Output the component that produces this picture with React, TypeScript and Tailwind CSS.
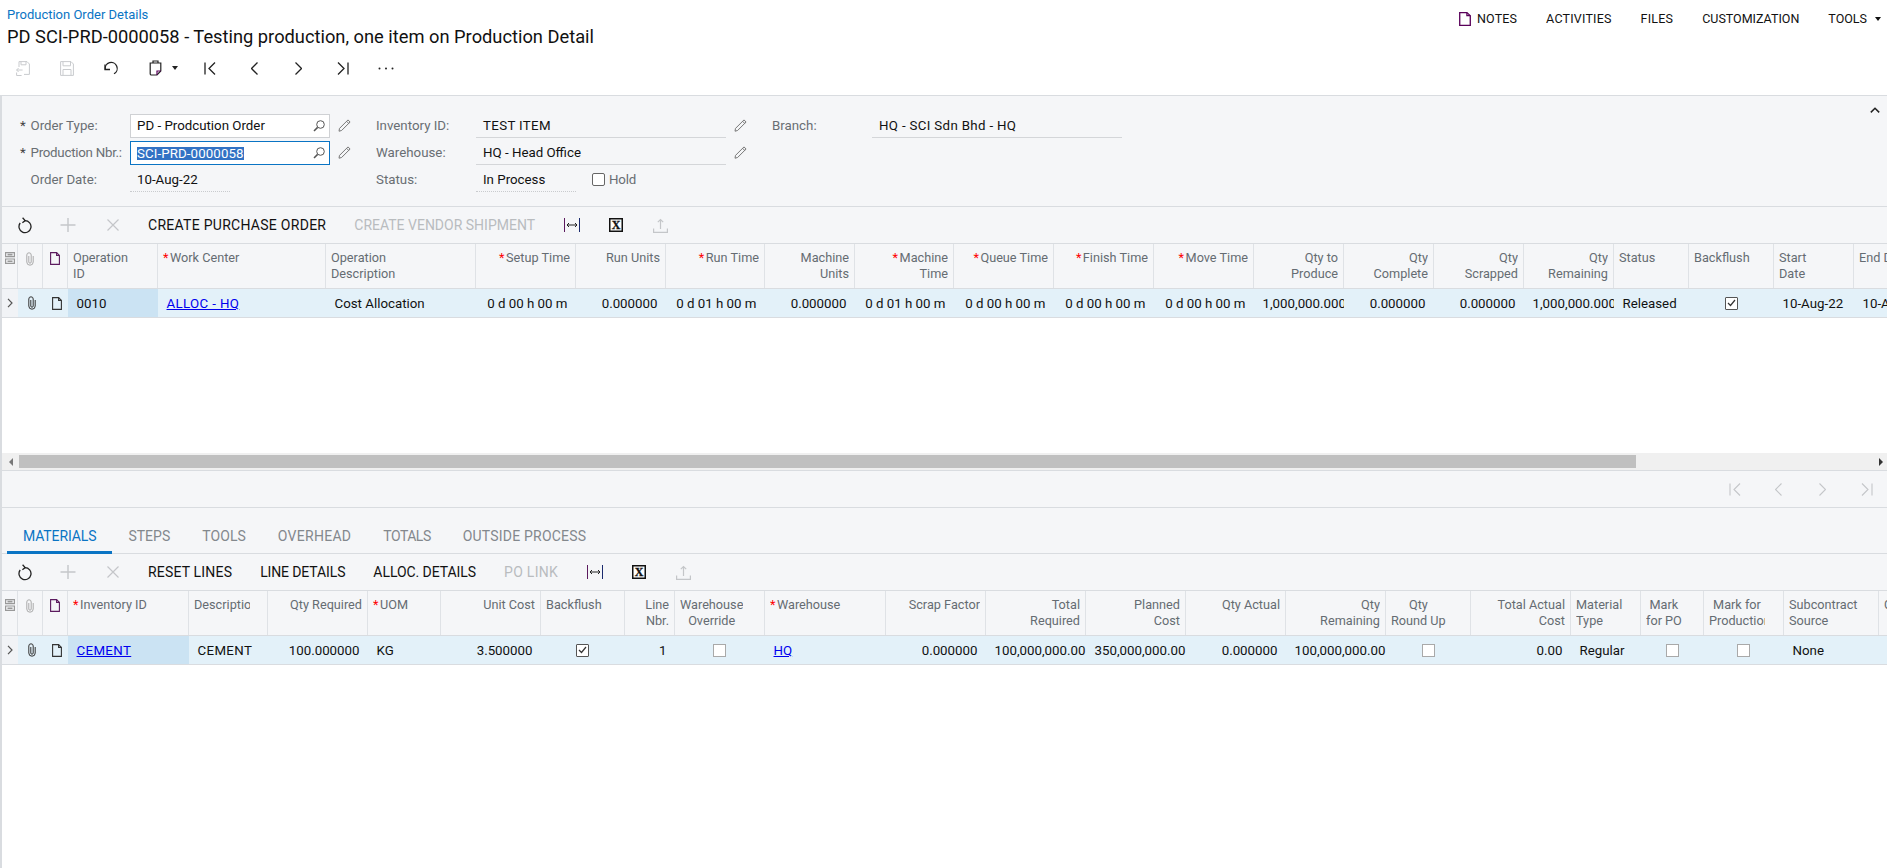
import React from "react";

type Col = { w: number; h: string[]; req?: boolean; right?: boolean; center?: boolean; clip?: boolean; v?: string; link?: boolean; caps?: boolean; check?: "on" | "off"; active?: boolean };

const Refresh = () => (
  <svg width="14" height="17" viewBox="0 0 14 17" fill="none" stroke="#222" strokeWidth="1.3">
    <path d="M7 3.6A6 6 0 1 1 2.2 6" />
    <path d="M4.6.8 7.2 3.6 4.4 5.8" />
  </svg>
);
const Plus = () => (
  <svg width="16" height="16" viewBox="0 0 16 16" stroke="#c4c6c9" strokeWidth="1.4"><path d="M8 1v14M.5 8h15" /></svg>
);
const Cross = () => (
  <svg width="12" height="12" viewBox="0 0 12 12" stroke="#c4c6c9" strokeWidth="1.2"><path d="M.5.5l11 11M11.5.5l-11 11" /></svg>
);
const Fit = () => (
  <svg width="16" height="14" viewBox="0 0 16 14" fill="none" stroke="#222" strokeWidth="1">
    <path d="M.5 0v14" stroke="#5b1a5e" /><path d="M15.5 0v14" stroke="#1a2a6e" />
    <path d="M3 7h10" /><path d="M5 5 3 7l2 2M11 5l2 2-2 2" />
  </svg>
);
const Excel = () => (
  <svg width="14" height="14" viewBox="0 0 14 14">
    <rect x=".75" y=".75" width="12.5" height="12.5" fill="#fff" stroke="#111" strokeWidth="1.5" />
    <text x="7" y="11" textAnchor="middle" fontFamily="'Liberation Serif',serif" fontWeight="700" fontSize="12" stroke="#111" strokeWidth=".3" fill="#111">X</text>
  </svg>
);
const Upload = () => (
  <svg width="15" height="15" viewBox="0 0 15 15" fill="none" stroke="#c4c6c9" strokeWidth="1.2">
    <path d="M7.5 11V1.5M4.8 4.2l2.7-2.7 2.7 2.7" /><path d="M.6 10.5v3.9h13.8v-3.9" />
  </svg>
);
const Doc = ({ c = "#222", w = 10, h = 13 }: { c?: string; w?: number; h?: number }) => (
  <svg width={w} height={h} viewBox="0 0 10 13" fill="none" stroke={c} strokeWidth="1.1" preserveAspectRatio="none">
    <path d="M.6.6h6L9.4 3.4v9H.6z" /><path d="M6.6.6v2.8h2.8" />
  </svg>
);
const Clip = ({ c = "#333" }: { c?: string }) => (
  <svg width="8" height="14" viewBox="0 0 8 14" fill="none" stroke={c} strokeWidth="1">
    <path d="M7.2 4v6a3.2 3.2 0 0 1-6.4 0V3a2.2 2.2 0 0 1 4.4 0v7a1.2 1.2 0 0 1-2.4 0V4" />
  </svg>
);
const Chev = () => (
  <svg width="6" height="10" viewBox="0 0 6 10" fill="none" stroke="#555" strokeWidth="1.2"><path d="M1 .8 5 5 1 9.2" /></svg>
);
const Sheet = () => (
  <svg width="10" height="12" viewBox="0 0 10 12" fill="none" stroke="#999" strokeWidth="1.2">
    <path d="M.6.6h8.8v4H.6zM.6 7h8.8v4.4H.6z" /><path d="M2.5 2.6h5M2.5 9.2h5" strokeWidth="1.6" />
  </svg>
);
const Search = () => (
  <svg width="12" height="12" viewBox="0 0 12 12" fill="none" stroke="#555" strokeWidth="1"><circle cx="7.5" cy="4.5" r="3.8" /><path d="M4.6 7.4 1 11" strokeWidth="1.5" /></svg>
);
const Pencil = () => (
  <svg width="13" height="13" viewBox="0 0 13 13" fill="none" stroke="#777" strokeWidth="1"><path d="M10 .9 12.1 3 3.6 11.5 1 12.2 1.5 9.4z" /><path d="M8.6 2.3l2.1 2.1" /></svg>
);
const First = ({ c = "#222", s = 1.3 }: { c?: string; s?: number }) => (
  <svg width="12" height="13" viewBox="0 0 12 13" fill="none" stroke={c} strokeWidth={s}><path d="M1 .5v12M11 .5l-6 6 6 6" /></svg>
);
const Prev = ({ c = "#222", s = 1.3 }: { c?: string; s?: number }) => (
  <svg width="7" height="13" viewBox="0 0 7 13" fill="none" stroke={c} strokeWidth={s}><path d="M6.5.5l-6 6 6 6" /></svg>
);
const Next = ({ c = "#222", s = 1.3 }: { c?: string; s?: number }) => (
  <svg width="7" height="13" viewBox="0 0 7 13" fill="none" stroke={c} strokeWidth={s}><path d="M.5.5l6 6-6 6" /></svg>
);
const Last = ({ c = "#222", s = 1.3 }: { c?: string; s?: number }) => (
  <svg width="12" height="13" viewBox="0 0 12 13" fill="none" stroke={c} strokeWidth={s}><path d="M11 .5v12M1 .5l6 6-6 6" /></svg>
);

const Box = ({ on }: { on?: boolean }) => (
  <span className={`flex h-[13px] w-[13px] items-center justify-center border bg-white ${on ? "border-[#555] rounded-[1px]" : "border-[#a9a9a9]"}`}>
    {on && (
      <svg width="9" height="8" viewBox="0 0 9 8" fill="none" stroke="#333" strokeWidth="1.2"><path d="M1 4l2.5 2.5L8 1" /></svg>
    )}
  </span>
);

const upper: Col[] = [
  { w: 90, h: ["Operation", "ID"], v: "0010", active: true },
  { w: 168, h: ["Work Center"], req: true, v: "ALLOC - HQ", link: true, caps: true },
  { w: 150, h: ["Operation", "Description"], v: "Cost Allocation" },
  { w: 100, h: ["Setup Time"], req: true, right: true, v: "0 d 00 h 00 m" },
  { w: 90, h: ["Run Units"], right: true, v: "0.000000" },
  { w: 99, h: ["Run Time"], req: true, right: true, v: "0 d 01 h 00 m" },
  { w: 90, h: ["Machine", "Units"], right: true, v: "0.000000" },
  { w: 99, h: ["Machine", "Time"], req: true, right: true, v: "0 d 01 h 00 m" },
  { w: 100, h: ["Queue Time"], req: true, right: true, v: "0 d 00 h 00 m" },
  { w: 100, h: ["Finish Time"], req: true, right: true, v: "0 d 00 h 00 m" },
  { w: 100, h: ["Move Time"], req: true, right: true, v: "0 d 00 h 00 m" },
  { w: 90, h: ["Qty to", "Produce"], right: true, v: "1,000,000.0000" },
  { w: 90, h: ["Qty", "Complete"], right: true, v: "0.000000" },
  { w: 90, h: ["Qty", "Scrapped"], right: true, v: "0.000000" },
  { w: 90, h: ["Qty", "Remaining"], right: true, v: "1,000,000.0000" },
  { w: 75, h: ["Status"], v: "Released" },
  { w: 85, h: ["Backflush"], center: true, check: "on" },
  { w: 80, h: ["Start", "Date"], v: "10-Aug-22" },
  { w: 90, h: ["End Date"], v: "10-Aug-22" },
];

const lower: Col[] = [
  { w: 121, h: ["Inventory ID"], req: true, v: "CEMENT", link: true, caps: true, active: true },
  { w: 79, h: ["Description"], clip: true, v: "CEMENT", caps: true },
  { w: 100, h: ["Qty Required"], right: true, v: "100.000000" },
  { w: 73, h: ["UOM"], req: true, v: "KG" },
  { w: 100, h: ["Unit Cost"], right: true, v: "3.500000" },
  { w: 84, h: ["Backflush"], center: true, check: "on" },
  { w: 50, h: ["Line", "Nbr."], right: true, v: "1" },
  { w: 90, h: ["Warehouse", "Override"], center: true, check: "off" },
  { w: 121, h: ["Warehouse"], req: true, v: "HQ", link: true },
  { w: 100, h: ["Scrap Factor"], right: true, v: "0.000000" },
  { w: 100, h: ["Total", "Required"], right: true, v: "100,000,000.00" },
  { w: 100, h: ["Planned", "Cost"], right: true, v: "350,000,000.00" },
  { w: 100, h: ["Qty Actual"], right: true, v: "0.000000" },
  { w: 100, h: ["Qty", "Remaining"], right: true, v: "100,000,000.00" },
  { w: 85, h: ["Qty", "Round Up"], center: true, check: "off" },
  { w: 100, h: ["Total Actual", "Cost"], right: true, v: "0.00" },
  { w: 70, h: ["Material", "Type"], v: "Regular" },
  { w: 63, h: ["Mark", "for PO"], center: true, check: "off" },
  { w: 80, h: ["Mark for", "Production"], center: true, clip: true, check: "off" },
  { w: 95, h: ["Subcontract", "Source"], v: "None" },
  { w: 60, h: ["Customer"] },
];

function HeaderCell({ c }: { c: Col }) {
  const lines = c.h.map((t, i) => (
    <div key={i} className="overflow-hidden">
      {i === 0 && c.req && <span className="mr-[1.5px] text-[#f00]">*</span>}
      {t}
    </div>
  ));
  return (
    <div style={{ width: c.w }} className={`shrink-0 overflow-hidden border-r border-[#dfe2e6] px-[5px] pt-[6px] text-[12.7px] leading-[16px] whitespace-nowrap text-[#656c72] ${c.right ? "text-right" : "text-left"}`}>
      {c.center ? (
        <div className={`inline-block text-center ${c.clip ? "max-w-[56px]" : ""}`}>{lines}</div>
      ) : c.clip ? (
        <div className="max-w-[56px]">{lines}</div>
      ) : (
        lines
      )}
    </div>
  );
}

function DataCell({ c }: { c: Col }) {
  const bg = c.active ? "bg-[#cbe3f3]" : "";
  if (c.check) {
    return (
      <div style={{ width: c.w }} className="flex shrink-0 items-center justify-center pr-[1px]">
        <Box on={c.check === "on"} />
      </div>
    );
  }
  return (
    <div style={{ width: c.w }} className={`shrink-0 overflow-hidden px-[8.5px] text-[13.3px] leading-[29px] whitespace-nowrap text-[#111] ${bg} ${c.right ? "text-right" : "text-left"} ${c.caps ? "tracking-[0.35px]" : ""}`}>
      {c.link ? <span className="text-[#0000ee] underline">{c.v}</span> : c.v}
    </div>
  );
}

function Grid({ cols }: { cols: Col[] }) {
  return (
    <div className="shrink-0 overflow-hidden">
      <div className="flex h-[46px] w-max border-y border-[#d9dce0] bg-[#f5f6f8]">
        <div className="flex w-[16px] shrink-0 justify-center border-r border-[#dfe2e6] pt-[8px]"><Sheet /></div>
        <div className="flex w-[25px] shrink-0 justify-center border-r border-[#dfe2e6] pt-[8px]"><Clip c="#aaa" /></div>
        <div className="flex w-[25px] shrink-0 justify-center border-r border-[#dfe2e6] pt-[8px]"><Doc c="#5b1a5e" /></div>
        {cols.map((c, i) => <HeaderCell key={i} c={c} />)}
      </div>
      <div className="flex h-[29px] w-max border-b border-[#d9dce0] bg-[#e3f1f9]">
        <div className="flex w-[16px] shrink-0 items-center justify-center bg-[#f1f3f6]"><Chev /></div>
        <div className="flex w-[25px] shrink-0 items-center justify-center pl-[3px]"><Clip /></div>
        <div className="flex w-[25px] shrink-0 items-center justify-center pl-[3px]"><Doc c="#333" /></div>
        {cols.map((c, i) => <DataCell key={i} c={c} />)}
      </div>
    </div>
  );
}

function GridToolbar({ actions }: { actions: { t: string; off?: boolean; track: string }[] }) {
  return (
    <div className="flex h-[36px] shrink-0 items-center bg-[#f5f6f8] pl-[16px]">
      <Refresh />
      <span className="ml-[28px] flex"><Plus /></span>
      <span className="ml-[31px] flex"><Cross /></span>
      <div className="ml-[29px] flex items-center gap-[28px]">
        {actions.map((a) => (
          <span key={a.t} className={`text-[14px] whitespace-nowrap ${a.track} ${a.off ? "text-[#b9bcbf]" : "text-[#111]"}`}>{a.t}</span>
        ))}
      </div>
      <span className="ml-[29px] flex"><Fit /></span>
      <span className="ml-[29px] flex"><Excel /></span>
      <span className="ml-[30px] flex"><Upload /></span>
    </div>
  );
}

function Label({ children, req, tight }: { children: React.ReactNode; req?: boolean; tight?: boolean }) {
  return (
    <div className={`flex items-center text-[13.3px] text-[#696e73] ${tight ? "tracking-[-0.25px]" : ""}`}>
      <span className="w-[10.5px] shrink-0 text-[#444]">{req ? "*" : ""}</span>
      {children}
    </div>
  );
}

function Ro({ v, dotted, narrow, caps }: { v: string; dotted?: boolean; narrow?: boolean; caps?: boolean }) {
  return (
    <div className={`flex h-[25px] items-center pt-[2px] pl-[7px] text-[13.3px] text-[#111] ${narrow ? "w-[100px]" : "w-full"} ${caps ? "tracking-[0.33px]" : ""} ${dotted ? "border-b border-dotted border-[#c9cbce]" : "border-b border-[#d4d6d9]"}`}>{v}</div>
  );
}

function Lookup({ v, selected }: { v: string; selected?: boolean }) {
  return (
    <div className={`flex h-[24px] w-[200px] items-center justify-between border bg-white pt-[1px] pr-[4px] pl-[6px] text-[13.3px] text-[#111] ${selected ? "border-[#0a74c4]" : "border-[#cfd1d4]"}`}>
      {selected ? <span className="bg-[#3272c4] leading-[13px] tracking-[0.1px] text-white">{v}</span> : <span>{v}</span>}
      <Search />
    </div>
  );
}

const PencilCell = () => <div className="flex pl-[8px]"><Pencil /></div>;

export default function App() {
  return (
    <div className="flex h-[868px] w-[1887px] flex-col overflow-hidden bg-white font-['Roboto',sans-serif]">
      {/* Page header */}
      <div className="h-[95px] shrink-0">
        <div className="flex items-start justify-between pl-[7px]">
          <div>
            <div className="pt-[6px] text-[13px] leading-[17px] text-[#0a74c4]">Production Order Details</div>
            <div className="mt-[2px] text-[18.3px] leading-[24px] whitespace-nowrap text-[#111]">PD SCI-PRD-0000058 - Testing production, one item on Production Detail</div>
          </div>
          <div className="flex items-center pt-[11px] pr-[6px] text-[12.5px] leading-[15px] text-[#111]">
            <span className="mr-[6px] flex"><Doc c="#5a005a" w={12} h={14} /></span>
            <span className="tracking-[0.15px]">NOTES</span>
            <span className="ml-[29px] tracking-[0.2px]">ACTIVITIES</span>
            <span className="ml-[29px] tracking-[0.2px]">FILES</span>
            <span className="ml-[29px]">CUSTOMIZATION</span>
            <span className="ml-[29px]">TOOLS</span>
            <span className="ml-[8px] h-0 w-0 border-x-[3.5px] border-t-[4px] border-x-transparent border-t-[#111]" />
          </div>
        </div>
        <div className="mt-[11px] flex h-[16px] items-center pl-[16px]">
          <svg width="14" height="15" viewBox="0 0 14 15" fill="none" stroke="#c9cbce" strokeWidth="1">
            <path d="M3 6V.6h8l2.4 2.4v10.4H8" /><path d="M5 .6v3.2h5V.6" /><path d="M.6 9h6M2.6 7 .6 9l2 2M.6 11.5v3h5" />
          </svg>
          <svg className="ml-[30px]" width="14" height="15" viewBox="0 0 14 15" fill="none" stroke="#c9cbce" strokeWidth="1">
            <path d="M.6.6h10.4l2.4 2.4v11.4H.6z" /><path d="M3 .6v4.2h7.5V.6M3 14.4V8.5h8v5.9" />
          </svg>
          <svg className="ml-[29px]" width="16" height="14" viewBox="0 0 16 14" fill="none" stroke="#222" strokeWidth="1.3">
            <path d="M2 3.5v5h5" /><path d="M2.3 8.5A6 6 0 1 1 11 12.7" />
          </svg>
          <svg className="ml-[30px]" width="13" height="16" viewBox="0 0 13 16" fill="none" stroke="#222" strokeWidth="1.2">
            <path d="M1.2 3h10.6v8l-3.8 4H2.4a1.2 1.2 0 0 1-1.2-1.2z" /><path d="M4 3V1h5v2" /><path d="M8 15v-4h3.8" stroke="#5a005a" />
          </svg>
          <span className="ml-[10px] h-0 w-0 border-x-[3.5px] border-t-[4px] border-x-transparent border-t-[#222]" />
          <span className="ml-[26px] flex"><First /></span>
          <span className="ml-[35px] flex"><Prev /></span>
          <span className="ml-[37px] flex"><Next /></span>
          <span className="ml-[35px] flex"><Last /></span>
          <svg className="ml-[29px]" width="16" height="3" viewBox="0 0 16 3" fill="#222"><circle cx="1.5" cy="1.5" r="1" /><circle cx="8" cy="1.5" r="1" /><circle cx="14.5" cy="1.5" r="1" /></svg>
        </div>
      </div>

      {/* Main body */}
      <div className="flex min-h-0 flex-1 flex-col border-t border-l-2 border-[#d9dce0]">
        {/* Form */}
        <div className="relative h-[111px] shrink-0 border-b border-[#d9dce0] bg-[#f5f6f8] pt-[16px] pl-[18px]">
          <div className="grid grid-cols-[110px_200px_46px_100px_250px_46px_100px_250px] grid-rows-[27px_27px_27px] items-center">
            <Label req>Order Type:</Label>
            <Lookup v="PD - Prodcution Order" />
            <PencilCell />
            <div className="text-[13.3px] text-[#696e73]">Inventory ID:</div>
            <Ro v="TEST ITEM" caps />
            <PencilCell />
            <div className="text-[13.3px] text-[#696e73]">Branch:</div>
            <Ro v="HQ - SCI Sdn Bhd - HQ" caps />

            <Label req tight>Production Nbr.:</Label>
            <Lookup v="SCI-PRD-0000058" selected />
            <PencilCell />
            <div className="text-[13.3px] text-[#696e73]">Warehouse:</div>
            <Ro v="HQ - Head Office" />
            <PencilCell />
            <div />
            <div />

            <Label>Order Date:</Label>
            <Ro v="10-Aug-22" dotted narrow />
            <div />
            <div className="text-[13.3px] text-[#696e73]">Status:</div>
            <div className="flex items-center">
              <Ro v="In Process" dotted narrow />
              <span className="ml-[16px] h-[13px] w-[13px] rounded-[2px] border border-[#666] bg-white" />
              <span className="ml-[4px] text-[13.3px] tracking-[-0.2px] text-[#696e73]">Hold</span>
            </div>
          </div>
          <svg className="absolute top-[11px] right-[7px]" width="10" height="6" viewBox="0 0 10 6" fill="none" stroke="#222" strokeWidth="1.5"><path d="M.8 5.4 5 1.2l4.2 4.2" /></svg>
        </div>

        {/* Upper grid */}
        <GridToolbar actions={[{ t: "CREATE PURCHASE ORDER", track: "tracking-[0.28px]" }, { t: "CREATE VENDOR SHIPMENT", off: true, track: "tracking-[0px]" }]} />
        <Grid cols={upper} />
        <div className="h-[135px] shrink-0 bg-white" />

        {/* Scrollbar */}
        <div className="flex h-[18px] shrink-0 items-center border-b border-[#d9dce0] bg-[#f0f0f0]">
          <span className="flex w-[17px] shrink-0 justify-center"><span className="h-0 w-0 border-y-[4px] border-r-[4px] border-y-transparent border-r-[#777]" /></span>
          <div className="h-[13px] w-[1617px] shrink-0 bg-[#c0c0c0]" />
          <span className="mr-[4px] ml-auto h-0 w-0 border-y-[4px] border-l-[4px] border-y-transparent border-l-[#333]" />
        </div>

        {/* Pager */}
        <div className="flex h-[37px] shrink-0 items-center justify-end border-b border-[#d9dce0] bg-[#f5f6f8] pr-[14px]">
          <First c="#c4c6c9" s={1.1} />
          <span className="ml-[34px] flex"><Prev c="#c4c6c9" s={1.1} /></span>
          <span className="ml-[37px] flex"><Next c="#c4c6c9" s={1.1} /></span>
          <span className="ml-[35px] flex"><Last c="#c4c6c9" s={1.1} /></span>
        </div>

        {/* Tabs */}
        <div className="flex h-[46px] shrink-0 items-end border-b border-[#d9dce0] bg-[#f5f6f8] pl-[5px] text-[14px] leading-[16px] whitespace-nowrap text-[#83888d]">
          <span className="-mb-px border-b-[3px] border-[#0a74c4] px-[16px] pb-[7px] tracking-[-0.12px] text-[#0a74c4]">MATERIALS</span>
          <span className="-mb-px border-b-[3px] border-transparent px-[16px] pb-[7px] tracking-[0.04px]">STEPS</span>
          <span className="-mb-px border-b-[3px] border-transparent px-[16px] pb-[7px] tracking-[0.04px]">TOOLS</span>
          <span className="-mb-px border-b-[3px] border-transparent px-[16px] pb-[7px] tracking-[0.28px]">OVERHEAD</span>
          <span className="-mb-px border-b-[3px] border-transparent px-[16px] pb-[7px] tracking-[-0.5px]">TOTALS</span>
          <span className="-mb-px border-b-[3px] border-transparent px-[16px] pb-[7px] tracking-[0.2px]">OUTSIDE PROCESS</span>
        </div>

        {/* Lower grid */}
        <GridToolbar actions={[{ t: "RESET LINES", track: "tracking-[0.18px]" }, { t: "LINE DETAILS", track: "tracking-[-0.12px]" }, { t: "ALLOC. DETAILS", track: "tracking-[-0.06px]" }, { t: "PO LINK", off: true, track: "tracking-[0.28px]" }]} />
        <Grid cols={lower} />
      </div>
    </div>
  );
}
